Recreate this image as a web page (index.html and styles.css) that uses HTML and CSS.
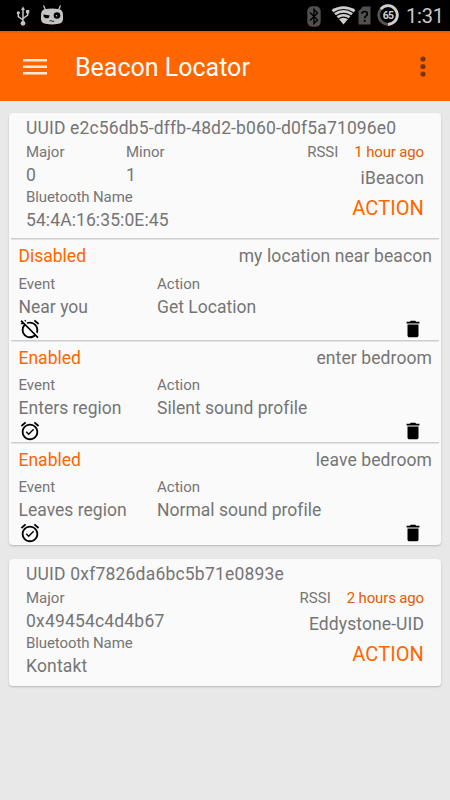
FILE: index.html
```html
<!DOCTYPE html>
<html lang="en">
<head>
<meta charset="utf-8">
<title>Beacon Locator</title>
<link rel="stylesheet" href="styles.css">
</head>
<body>
<svg class="defs" width="0" height="0">
  <symbol id="trash" viewBox="0 0 24 24"><path d="M6 19c0 1.1.9 2 2 2h8c1.1 0 2-.9 2-2V7H6v12zM19 4h-3.5l-1-1h-5l-1 1H5v2h14V4z"/></symbol>
  <symbol id="alarm-on" viewBox="0 0 24 24"><path d="M22 5.72l-4.600-3.860-1.290 1.530 4.600 3.860L22 5.720zM7.880 3.390L6.600 1.860 2 5.710l1.290 1.530 4.590-3.850zM12 4c-4.970 0-9 4.030-9 9s4.020 9 9 9c4.970 0 9-4.030 9-9s-4.030-9-9-9zm0 16c-3.870 0-7-3.130-7-7s3.130-7 7-7 7 3.130 7 7-3.130 7-7 7zm-1.460-5.470L8.410 12.400l-1.060 1.060 3.180 3.180 6-6-1.060-1.060-4.930 4.950z"/></symbol>
  <symbol id="alarm-off" viewBox="0 0 24 24"><path d="M12 6c3.870 0 7 3.130 7 7 0 .84-.16 1.650-.43 2.400l1.520 1.520c.58-1.190.91-2.510.91-3.920 0-4.970-4.030-9-9-9-1.410 0-2.730.33-3.920.91L9.600 6.430C10.350 6.160 11.160 6 12 6zm10-.28l-4.600-3.860-1.290 1.530 4.600 3.860L22 5.720zM2.920 2.290L1.650 3.570 2.980 4.900l-1.110.93 1.420 1.420 1.110-.94.8.8C3.830 8.690 3 10.750 3 13c0 4.970 4.020 9 9 9 2.250 0 4.310-.83 5.890-2.200l2.200 2.200 1.270-1.270L3.890 3.270l-.97-.98zm13.550 16.100C15.260 19.390 13.700 20 12 20c-3.870 0-7-3.130-7-7 0-1.700.61-3.260 1.610-4.470l9.860 9.860zM8.020 3.280L6.600 1.860l-.86.71 1.420 1.420.86-.71z"/></symbol>
</svg>

<div class="status">
  <svg class="usb" width="14" height="20" viewBox="0 0 14 20" fill="#c4c4c4" stroke="#c4c4c4">
    <path d="M7 17V3M7 14L2.300 10.500V7M7 12.500L11.700 9V5" fill="none" stroke-width="1.500"/>
    <path d="M7 .5L9 4H5z" stroke="none"/><circle cx="7" cy="17.300" r="2.400" stroke="none"/><circle cx="2.300" cy="6.800" r="1.600" stroke="none"/><path d="M10 4h3.300v3.300H10z" stroke="none"/>
  </svg>
  <svg class="cid" width="24" height="20" viewBox="0 0 24 20">
    <path d="M3.500.5L5.500 5M20.500.5L18.500 5" stroke="#c4c4c4" stroke-width="1.300"/>
    <path d="M5 4.300Q12 2.600 19 4.300Q23 5 23 10V14Q23 18 18.500 18.800Q12 20 5.500 18.800Q1 18 1 14V10Q1 5 5 4.300z" fill="#c4c4c4"/>
    <path d="M3.500 9.500L9.800 10.500A3.100 3.100 0 1 1 3.500 9.500z" fill="#000"/><circle cx="17" cy="10.500" r="3.300" fill="#000"/><circle cx="16.500" cy="10.700" r=".8" fill="#c4c4c4"/><path d="M9.500 16Q11 15.200 12 16T14.200 16.200" stroke="#222" fill="none"/>
  </svg>
  <span class="grow"></span>
  <svg class="bt" width="14" height="21" viewBox="0 0 14 21"><rect x=".3" y=".3" width="13.400" height="20.400" rx="5" fill="#505050"/><path d="M3 6.500L10.500 14L7 17.500V3.500L10.500 7L3 14.500" fill="none" stroke="#000" stroke-width="1.400"/></svg>
  <svg class="wifi" width="25" height="19" viewBox="0 0 25 19"><path d="M.5 4Q12.500-3.500 24.500 4L12.500 18.500z" fill="#cfcfcf"/><path d="M2.500 6.800Q12.500.3 22.500 6.800M5 9.800Q12.500 5 20 9.800M7.500 12.800Q12.500 9.500 17.500 12.800" fill="none" stroke="#000" stroke-width="1.100"/></svg>
  <svg class="sim" width="13" height="19" viewBox="0 0 13 19"><path d="M5 .5H12.500V18.500H.5V5.500z" fill="#505050"/><path d="M3.800 7.800Q4 5.500 6.600 5.500Q9.300 5.500 9.300 7.800Q9.300 9.100 7.800 10.100Q6.700 10.900 6.700 12.300" fill="none" stroke="#000" stroke-width="1.700"/><circle cx="6.700" cy="14.900" r="1.100"/></svg>
  <div class="battery">
    <svg width="22" height="22" viewBox="0 0 22 22" fill="none" stroke-width="2.700"><circle cx="11" cy="11" r="9.300" stroke="#555"/><path d="M11 1.700A9.300 9.300 0 1 1 11 20.300M11 1.700A9.300 9.300 0 0 0 3.800 5.100" stroke="#cfcfcf"/></svg>
    <span class="level">65</span>
  </div>
  <span class="clock">1:31</span>
</div>

<header class="toolbar">
  <svg class="menu" width="24" height="18" viewBox="0 0 24 18" fill="#ffeadd"><path d="M0 1h24v2.500H0zM0 7.500h24V10H0zM0 14h24v2.500H0z"/></svg>
  <h1>Beacon Locator</h1>
  <svg width="6" height="21" viewBox="0 0 6 21" fill="#803300"><circle cx="3" cy="3" r="2.600"/><circle cx="3" cy="10.500" r="2.600"/><circle cx="3" cy="18" r="2.600"/></svg>
</header>

<main>
  <section class="card">
    <div class="beacon">
      <div class="uuid">UUID e2c56db5-dffb-48d2-b060-d0f5a71096e0</div>
      <div class="info">
        <div class="left">
          <div class="numbers">
            <div><div class="label">Major</div><div class="value">0</div></div>
            <div><div class="label">Minor</div><div class="value">1</div></div>
          </div>
          <div class="label name">Bluetooth Name</div>
          <div class="value">54:4A:16:35:0E:45</div>
        </div>
        <div class="right">
          <div class="label seen"><span>RSSI</span><span class="ago">1 hour ago</span></div>
          <div class="kind">iBeacon</div>
          <div class="action">ACTION</div>
        </div>
      </div>
    </div>
    <div class="rule">
      <div class="top"><span class="state">Disabled</span><span class="title">my location near beacon</span></div>
      <div class="pair"><span>Event</span><span>Action</span></div>
      <div class="pair big"><span>Near you</span><span>Get Location</span></div>
      <div class="icons"><svg width="22" height="22"><use href="#alarm-off"/></svg><svg width="22" height="22"><use href="#trash"/></svg></div>
    </div>
    <div class="rule">
      <div class="top"><span class="state">Enabled</span><span class="title">enter bedroom</span></div>
      <div class="pair"><span>Event</span><span>Action</span></div>
      <div class="pair big"><span>Enters region</span><span>Silent sound profile</span></div>
      <div class="icons"><svg width="22" height="22"><use href="#alarm-on"/></svg><svg width="22" height="22"><use href="#trash"/></svg></div>
    </div>
    <div class="rule final">
      <div class="top"><span class="state">Enabled</span><span class="title">leave bedroom</span></div>
      <div class="pair"><span>Event</span><span>Action</span></div>
      <div class="pair big"><span>Leaves region</span><span>Normal sound profile</span></div>
      <div class="icons"><svg width="22" height="22"><use href="#alarm-on"/></svg><svg width="22" height="22"><use href="#trash"/></svg></div>
    </div>
  </section>

  <section class="card">
    <div class="beacon last">
      <div class="uuid">UUID 0xf7826da6bc5b71e0893e</div>
      <div class="info">
        <div class="left">
          <div class="label">Major</div>
          <div class="value">0x49454c4d4b67</div>
          <div class="label name">Bluetooth Name</div>
          <div class="value">Kontakt</div>
        </div>
        <div class="right">
          <div class="label seen"><span>RSSI</span><span class="ago">2 hours ago</span></div>
          <div class="kind">Eddystone-UID</div>
          <div class="action">ACTION</div>
        </div>
      </div>
    </div>
  </section>
</main>
</body>
</html>
```

FILE: styles.css
```css
* { box-sizing: border-box; }
body {
  margin: 0;
  height: 800px;
  overflow: hidden;
  background: #e8e8e8;
  color: #757575;
  font-family: Roboto, sans-serif;
  font-size: 17.5px;
  white-space: nowrap;
}
svg { display: block; flex: none; }
.defs { position: absolute; }

.status {
  display: flex;
  align-items: center;
  height: 31px;
  padding: 0 8px 0 16px;
  background: #000;
}
.usb { margin-top: 1px; }
.cid { margin: -2px 0 0 10px; }
.grow { flex: 1; }
.bt { margin-top: 1px; }
.wifi { margin-left: 10px; }
.sim { margin-left: 2px; }
.battery { display: grid; place-items: center; margin: -1px 0 0 6px; }
.battery > * { grid-area: 1 / 1; }
.level { color: #d0d0d0; font-size: 10.5px; font-weight: 700; letter-spacing: -0.8px; }
.clock { width: 36px; margin-left: 7px; color: #c8c8c8; font-size: 20px; line-height: 31px; padding-top: 2px; letter-spacing: -0.2px; }

.toolbar {
  display: flex;
  align-items: center;
  height: 70px;
  padding: 1px 24px 0 23px;
  background: linear-gradient(#e25b00, #ff6600 3px);
  color: #fff;
}
.toolbar h1 { flex: 1; margin: 2px 0 0 28px; font-size: 25px; font-weight: 400; line-height: 32px; }

main { display: flex; flex-direction: column; gap: 14px; padding: 12px 9px 0; }
.card {
  border-radius: 4px;
  background: #fafafa;
  box-shadow: 0 1px 2px rgba(0, 0, 0, 0.22);
}
.beacon { height: 125px; padding: 4px 17px 0; }
.beacon.last { height: 127px; }
.last .info { padding-top: 0.5px; }
.uuid { height: 24px; line-height: 23px; letter-spacing: 0.15px; }
.last .uuid { letter-spacing: 0.2px; }
.info { display: flex; justify-content: space-between; }
.numbers { display: grid; grid-template-columns: 100px auto; }
.label { height: 22.5px; font-size: 15px; line-height: 23px; }
.name { letter-spacing: -0.1px; }
.value { height: 22.5px; line-height: 23px; letter-spacing: 0.1px; }
.last .value { letter-spacing: 0.18px; }
.right { text-align: right; }
.seen { display: flex; justify-content: flex-end; gap: 16px; }
.ago { color: #e65c00; letter-spacing: -0.15px; }
.kind { height: 26px; line-height: 28px; letter-spacing: 0.1px; }
.action { color: #ff6600; font-size: 20px; line-height: 36px; letter-spacing: 0.1px; }

.rule { height: 101.8px; padding: 0 9px 0 9.500px; background: linear-gradient(#cdcdcd, #cdcdcd) 2px 0 / 428px 1.5px no-repeat; }
.final { height: 103.4px; }
.top { display: flex; justify-content: space-between; padding-top: 6px; height: 34.5px; line-height: 25px; }
.state { color: #ff6600; }
.title { letter-spacing: 0.1px; }
.pair { display: grid; grid-template-columns: 138.500px auto; height: 23px; font-size: 15px; line-height: 23px; }
.big { height: 22.5px; font-size: 17.5px; letter-spacing: 0.02px; }
.icons { display: flex; justify-content: space-between; padding-right: 8px; }
```
